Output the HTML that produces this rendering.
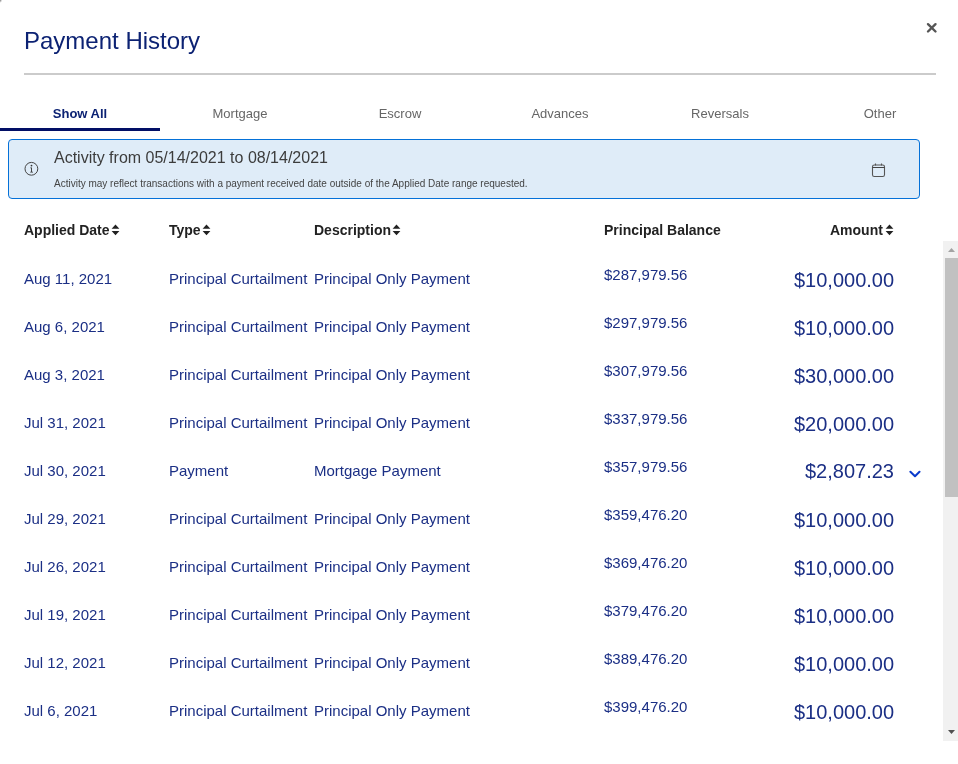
<!DOCTYPE html>
<html><head><meta charset="utf-8">
<style>
body *{will-change:transform;}
html,body{margin:0;padding:0;background:#fff;width:958px;height:764px;overflow:hidden;position:relative;font-family:"Liberation Sans",sans-serif;}
.a{position:absolute;white-space:nowrap;line-height:1;}
.title{left:23.5px;top:29px;font-size:24px;color:#0c2273;}
.rule{position:absolute;left:24px;top:73px;width:912px;height:2px;background:#cbcbcb;}
.close{position:absolute;left:926px;top:22px;width:11px;height:11px;}
.tab{position:absolute;top:107px;width:160px;text-align:center;font-size:13px;color:#666;line-height:1;}
.tab.on{font-weight:bold;color:#0c2273;}
.uline{position:absolute;left:0;top:128px;width:160px;height:3px;background:#020f66;}
.info{position:absolute;left:8px;top:139px;width:910px;height:58px;border:1px solid #0571d8;border-radius:4px;background:#dfecf8;}
.h{font-size:14px;font-weight:bold;color:#222;top:223px;}
.sort{display:inline-block;vertical-align:top;margin-left:2px;margin-top:2px;}
.r{font-size:15px;color:#1b2f85;}
.pb{font-size:15px;color:#1b2f85;}
.am{font-size:20px;color:#1b2f85;text-align:right;}
.sb{position:absolute;left:943px;top:241px;width:15px;height:500px;background:#f1f1f1;}
</style></head><body>
<div style="position:absolute;left:0;top:0;width:1px;height:1px;background:#9c9c9c"></div>
<div style="position:absolute;left:1px;top:0;width:1px;height:1px;background:#dadada"></div>
<div style="position:absolute;left:0;top:1px;width:1px;height:1px;background:#c4c4c4"></div>
<div style="position:absolute;left:1px;top:1px;width:1px;height:1px;background:#ececec"></div>
<div style="position:absolute;left:0;top:2px;width:1px;height:1px;background:#f2f2f2"></div>
<div class="a title">Payment History</div>
<div class="rule"></div>
<svg style="position:absolute;left:924px;top:20px" width="16" height="16" viewBox="0 0 16 16"><path d="M4 4.2L11.5 11.5M11.5 4.2L4 11.5" stroke="#555" stroke-width="2.4" stroke-linecap="round"/></svg>

<div class="tab on" style="left:0">Show All</div>
<div class="tab" style="left:160px">Mortgage</div>
<div class="tab" style="left:320px">Escrow</div>
<div class="tab" style="left:480px">Advances</div>
<div class="tab" style="left:640px">Reversals</div>
<div class="tab" style="left:800px">Other</div>
<div class="uline"></div>

<div class="info"></div>
<svg style="position:absolute;left:24px;top:161px" width="15" height="15" viewBox="0 0 15 15"><circle cx="7.4" cy="7.8" r="6.4" fill="none" stroke="#444" stroke-width="1"/><circle cx="7.5" cy="4.6" r="0.9" fill="#333"/><path d="M6.3 6.6H8V10.8H9V11.5H6.2V10.8H7.1V7.3H6.3Z" fill="#333"/></svg>
<div class="a" style="left:54px;top:150px;font-size:16px;color:#3c3c3c;">Activity from 05/14/2021 to 08/14/2021</div>
<div class="a" style="left:54px;top:179px;font-size:10px;color:#444;">Activity may reflect transactions with a payment received date outside of the Applied Date range requested.</div>
<svg style="position:absolute;left:871px;top:162px" width="15" height="16" viewBox="0 0 15 16"><rect x="1.5" y="3" width="12" height="11.5" rx="1.8" fill="none" stroke="#555" stroke-width="1.1"/><path d="M1.5 5.5H13.5" stroke="#444" stroke-width="1"/><path d="M4.5 1.5V3.5M10.5 1.5V3.5" stroke="#555" stroke-width="1.1"/></svg>

<div class="a h" style="left:24px">Applied Date<svg class="sort" width="7" height="11" viewBox="0 0 7 11" overflow="visible"><path d="M-0.4 3.8H7.4L3.5 -0.5Z M-0.4 6.0H7.4L3.5 10.3Z" fill="#222"/></svg></div>
<div class="a h" style="left:169px">Type<svg class="sort" width="7" height="11" viewBox="0 0 7 11" overflow="visible"><path d="M-0.4 3.8H7.4L3.5 -0.5Z M-0.4 6.0H7.4L3.5 10.3Z" fill="#222"/></svg></div>
<div class="a h" style="left:314px">Description<svg class="sort" width="7" height="11" viewBox="0 0 7 11" overflow="visible"><path d="M-0.4 3.8H7.4L3.5 -0.5Z M-0.4 6.0H7.4L3.5 10.3Z" fill="#222"/></svg></div>
<div class="a h" style="left:604px">Principal Balance</div>
<div class="a h" style="right:65px">Amount<svg class="sort" style="margin-left:3px" width="7" height="11" viewBox="0 0 7 11" overflow="visible"><path d="M-0.4 3.8H7.4L3.5 -0.5Z M-0.4 6.0H7.4L3.5 10.3Z" fill="#222"/></svg></div>

<!--ROWS-->
<div class="a r" style="left:24px;top:271px">Aug 11, 2021</div>
<div class="a r" style="left:169px;top:271px">Principal Curtailment</div>
<div class="a r" style="left:314px;top:271px">Principal Only Payment</div>
<div class="a pb" style="left:604px;top:267px">$287,979.56</div>
<div class="a am" style="right:64px;top:270px">$10,000.00</div>
<div class="a r" style="left:24px;top:319px">Aug 6, 2021</div>
<div class="a r" style="left:169px;top:319px">Principal Curtailment</div>
<div class="a r" style="left:314px;top:319px">Principal Only Payment</div>
<div class="a pb" style="left:604px;top:315px">$297,979.56</div>
<div class="a am" style="right:64px;top:318px">$10,000.00</div>
<div class="a r" style="left:24px;top:367px">Aug 3, 2021</div>
<div class="a r" style="left:169px;top:367px">Principal Curtailment</div>
<div class="a r" style="left:314px;top:367px">Principal Only Payment</div>
<div class="a pb" style="left:604px;top:363px">$307,979.56</div>
<div class="a am" style="right:64px;top:366px">$30,000.00</div>
<div class="a r" style="left:24px;top:415px">Jul 31, 2021</div>
<div class="a r" style="left:169px;top:415px">Principal Curtailment</div>
<div class="a r" style="left:314px;top:415px">Principal Only Payment</div>
<div class="a pb" style="left:604px;top:411px">$337,979.56</div>
<div class="a am" style="right:64px;top:414px">$20,000.00</div>
<div class="a r" style="left:24px;top:463px">Jul 30, 2021</div>
<div class="a r" style="left:169px;top:463px">Payment</div>
<div class="a r" style="left:314px;top:463px">Mortgage Payment</div>
<div class="a pb" style="left:604px;top:459px">$357,979.56</div>
<div class="a am" style="right:64px;top:461px">$2,807.23</div>
<div class="a r" style="left:24px;top:511px">Jul 29, 2021</div>
<div class="a r" style="left:169px;top:511px">Principal Curtailment</div>
<div class="a r" style="left:314px;top:511px">Principal Only Payment</div>
<div class="a pb" style="left:604px;top:507px">$359,476.20</div>
<div class="a am" style="right:64px;top:510px">$10,000.00</div>
<div class="a r" style="left:24px;top:559px">Jul 26, 2021</div>
<div class="a r" style="left:169px;top:559px">Principal Curtailment</div>
<div class="a r" style="left:314px;top:559px">Principal Only Payment</div>
<div class="a pb" style="left:604px;top:555px">$369,476.20</div>
<div class="a am" style="right:64px;top:558px">$10,000.00</div>
<div class="a r" style="left:24px;top:607px">Jul 19, 2021</div>
<div class="a r" style="left:169px;top:607px">Principal Curtailment</div>
<div class="a r" style="left:314px;top:607px">Principal Only Payment</div>
<div class="a pb" style="left:604px;top:603px">$379,476.20</div>
<div class="a am" style="right:64px;top:606px">$10,000.00</div>
<div class="a r" style="left:24px;top:655px">Jul 12, 2021</div>
<div class="a r" style="left:169px;top:655px">Principal Curtailment</div>
<div class="a r" style="left:314px;top:655px">Principal Only Payment</div>
<div class="a pb" style="left:604px;top:651px">$389,476.20</div>
<div class="a am" style="right:64px;top:654px">$10,000.00</div>
<div class="a r" style="left:24px;top:703px">Jul 6, 2021</div>
<div class="a r" style="left:169px;top:703px">Principal Curtailment</div>
<div class="a r" style="left:314px;top:703px">Principal Only Payment</div>
<div class="a pb" style="left:604px;top:699px">$399,476.20</div>
<div class="a am" style="right:64px;top:702px">$10,000.00</div>
<svg style="position:absolute;left:909px;top:470px" width="12" height="8" viewBox="0 0 12 8"><path d="M1.4 1.7L6 6.3L10.5 1.7" fill="none" stroke="#0a3acc" stroke-width="2" stroke-linecap="round" stroke-linejoin="round"/></svg>
<!--/ROWS-->

<div class="sb">
  <svg style="position:absolute;left:0;top:0" width="15" height="17" viewBox="0 0 15 17"><path d="M5 11H12L8.5 7Z" fill="#a3a3a3"/></svg>
  <div style="position:absolute;left:2px;top:17px;width:13px;height:239px;background:#c1c1c1;"></div>
  <svg style="position:absolute;left:0;top:483px" width="15" height="17" viewBox="0 0 15 17"><path d="M5 6H12L8.5 10Z" fill="#505050"/></svg>
</div>
</body></html>
